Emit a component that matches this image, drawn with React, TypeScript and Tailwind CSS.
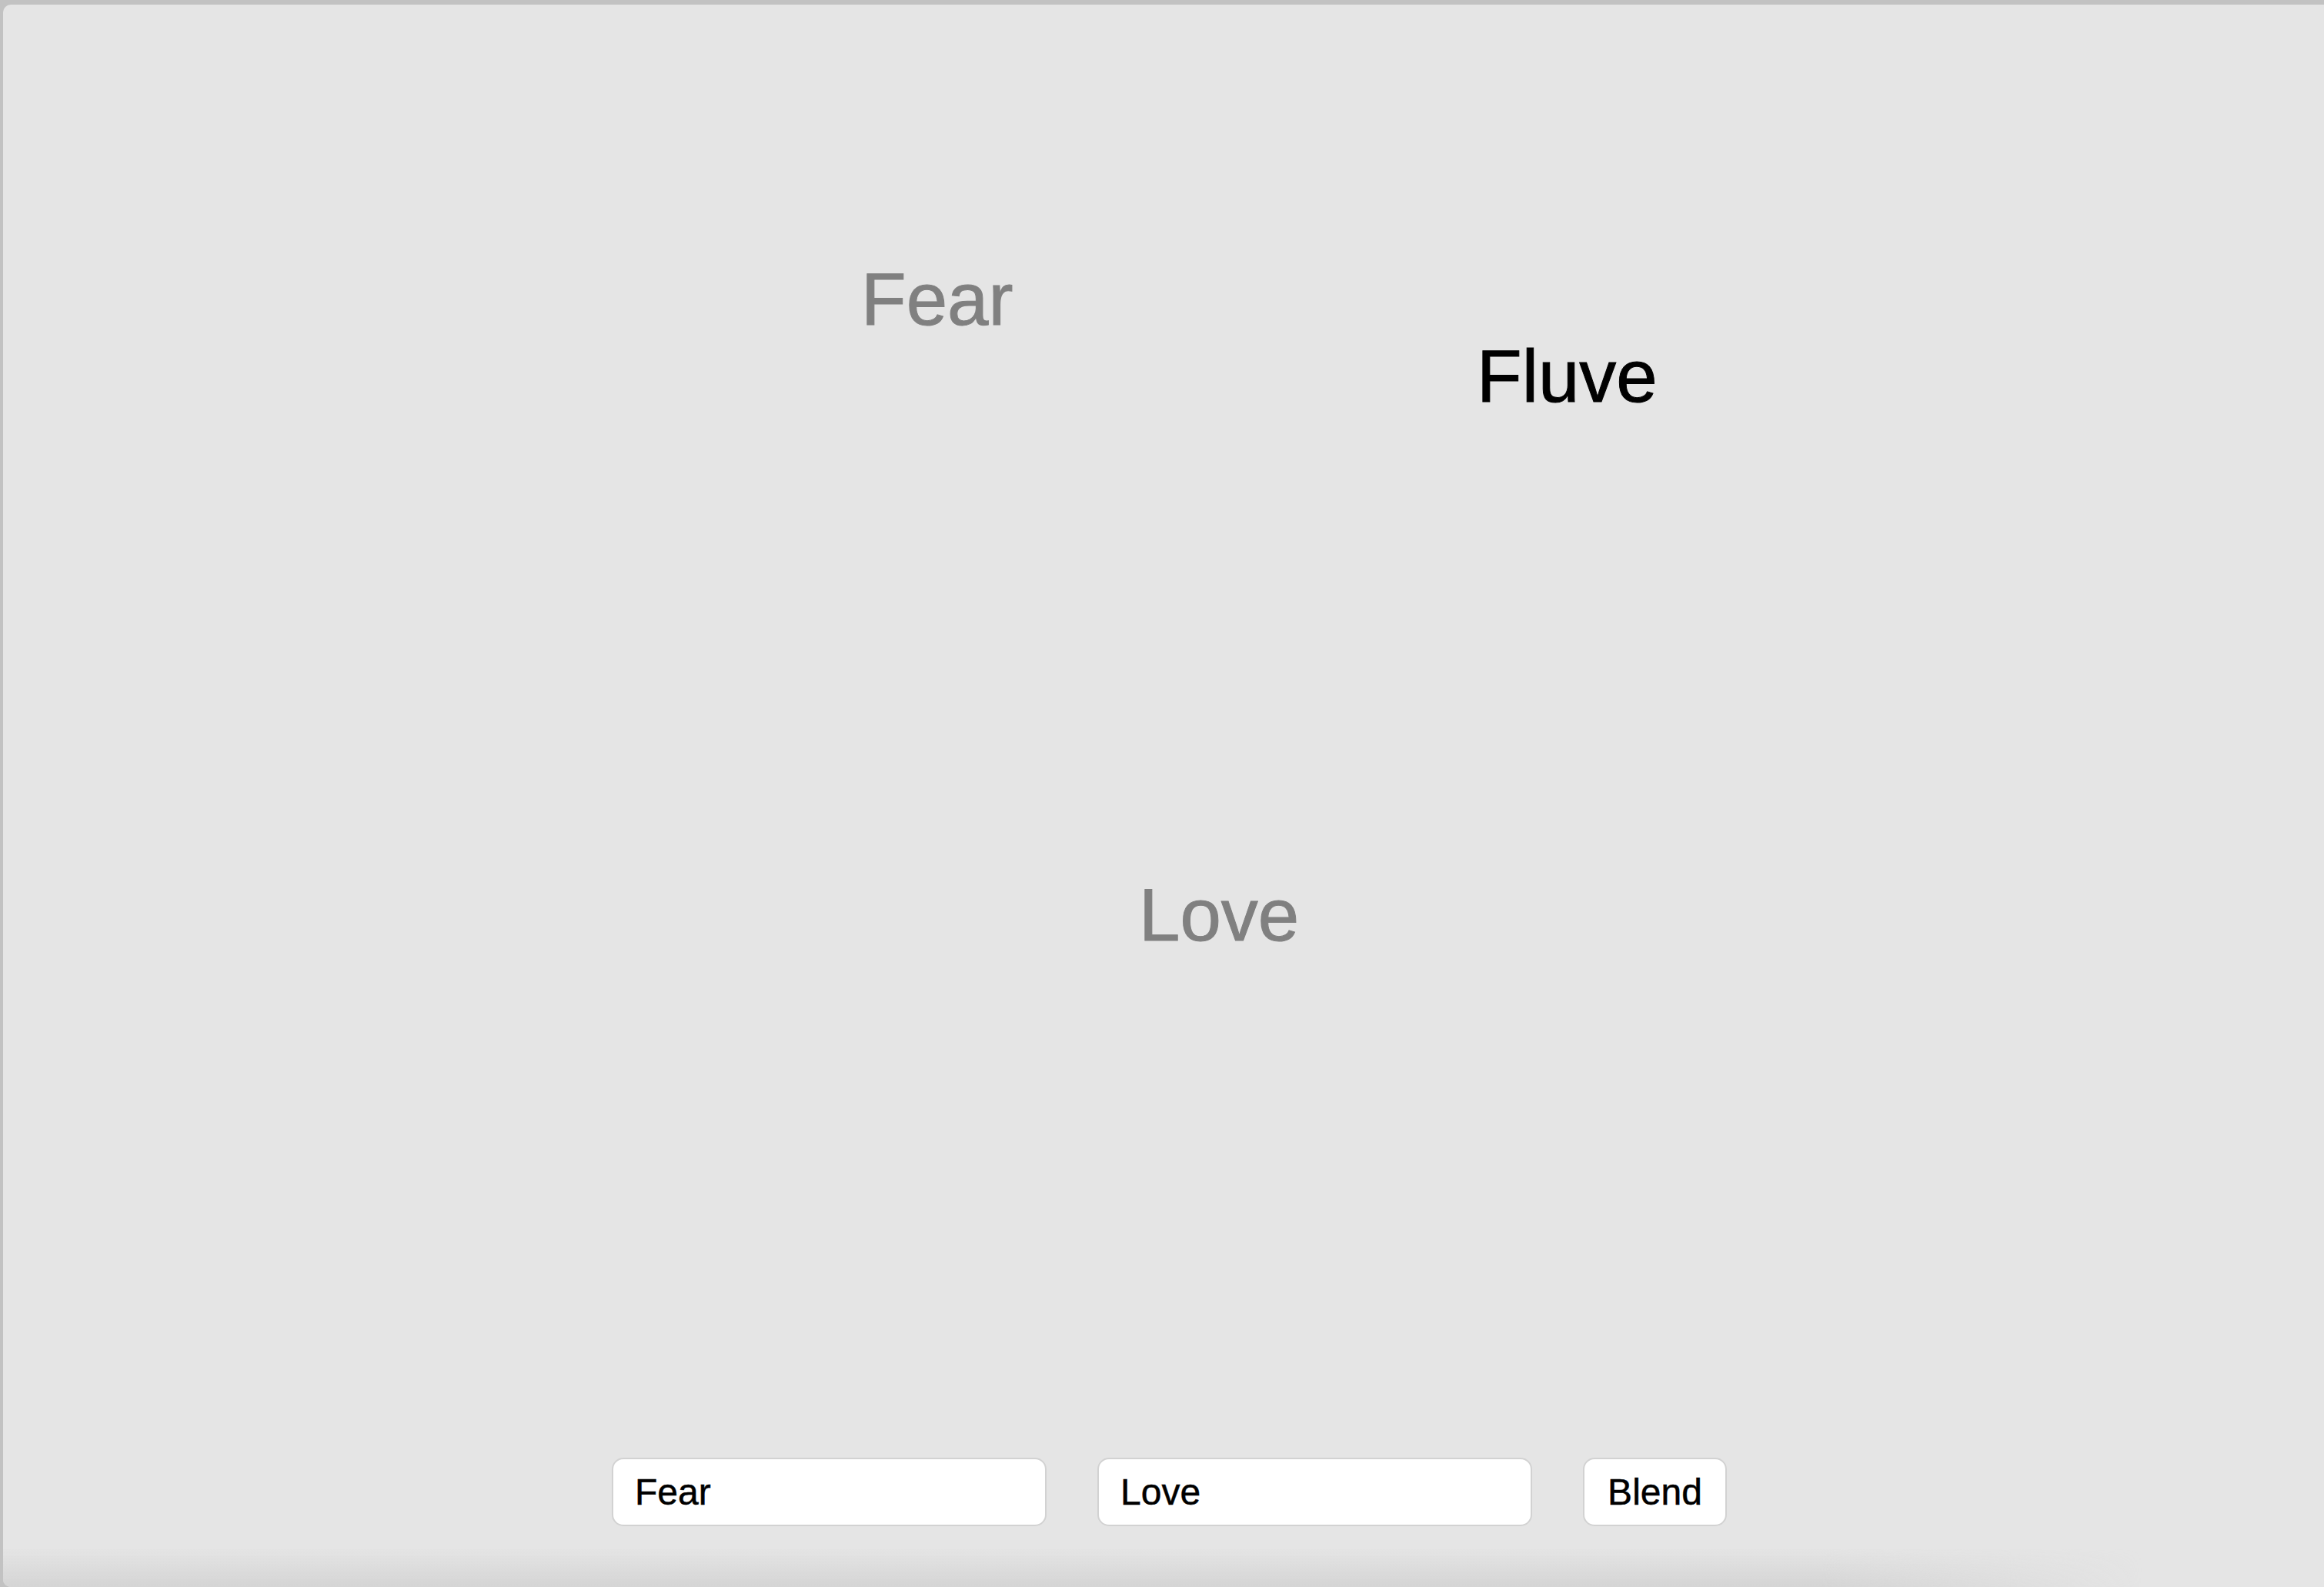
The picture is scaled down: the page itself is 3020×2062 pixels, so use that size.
import React, { useState } from 'react';

const font = { fontFamily: '"Liberation Sans", Arial, Helvetica, sans-serif' };

export default function App() {
  const [first, setFirst] = useState('Fear');
  const [second, setSecond] = useState('Love');

  return (
    <div className="w-[3020px] h-[2062px] bg-[#c2c2c2] pt-[6px] pl-[4px] flex flex-col" style={font}>
      {/* Canvas panel */}
      <div className="relative flex-1 flex flex-col justify-end bg-[#e5e5e5] rounded-tl-[10px] rounded-bl-[10px] overflow-hidden">
        {/* Blended words */}
        <span className="absolute left-[1115px] top-[335px] text-[96px] leading-none text-[#808080] [-webkit-text-stroke:1px_#808080]">Fear</span>
        <span className="absolute left-[1915px] top-[435px] text-[96px] leading-none text-black [-webkit-text-stroke:1px_black]">Fluve</span>
        <span className="absolute left-[1476px] top-[1135px] text-[96px] leading-none text-[#808080] [-webkit-text-stroke:1px_#808080]">Love</span>

        {/* Controls */}
        <div className="relative z-10 flex items-center gap-[66px] pl-[791px] pb-[79px]">
          <input
            value={first}
            onChange={e => setFirst(e.target.value)}
            className="w-[565px] h-[89px] bg-white border-2 border-[#d2d2d2] rounded-[15px] px-[28px] text-[48px] text-black outline-none [-webkit-text-stroke:0.5px_black]"
            style={font}
          />
          <input
            value={second}
            onChange={e => setSecond(e.target.value)}
            className="w-[565px] h-[89px] bg-white border-2 border-[#d2d2d2] rounded-[15px] px-[28px] text-[48px] text-black outline-none [-webkit-text-stroke:0.5px_black]"
            style={font}
          />
          <button
            className="w-[187px] h-[89px] bg-white border-2 border-[#d2d2d2] rounded-[15px] text-[48px] text-black [-webkit-text-stroke:0.5px_black]"
            style={font}
          >
            Blend
          </button>
        </div>

        {/* bottom shading, fading out to the right */}
        <div className="absolute left-0 bottom-0 w-[2780px] h-[50px] bg-gradient-to-b from-transparent to-[#d4d4d4] [mask-image:linear-gradient(to_right,black_85%,transparent)]" />
      </div>
    </div>
  );
}
